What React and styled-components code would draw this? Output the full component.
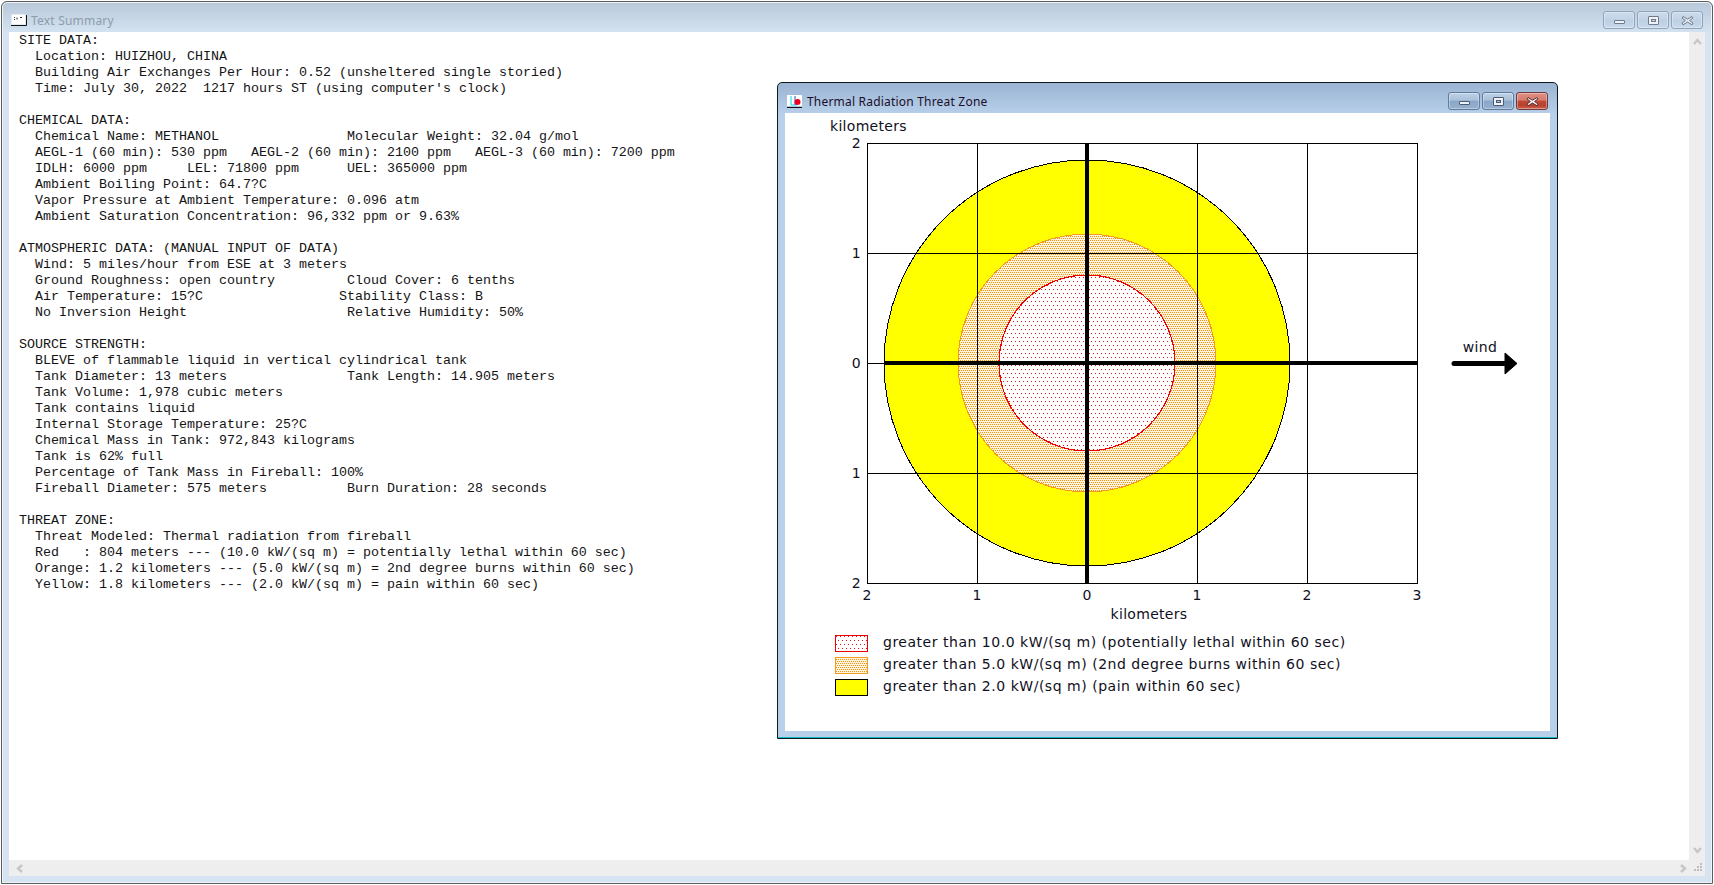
import React from 'react'
import styled, { createGlobalStyle } from 'styled-components'

const GlobalStyle = createGlobalStyle`
  html, body {
    margin: 0;
    padding: 0;
    background: #fff;
    overflow: hidden;
  }
`

const SUMMARY = `SITE DATA:
  Location: HUIZHOU, CHINA
  Building Air Exchanges Per Hour: 0.52 (unsheltered single storied)
  Time: July 30, 2022  1217 hours ST (using computer's clock)

CHEMICAL DATA:
  Chemical Name: METHANOL                Molecular Weight: 32.04 g/mol
  AEGL-1 (60 min): 530 ppm   AEGL-2 (60 min): 2100 ppm   AEGL-3 (60 min): 7200 ppm
  IDLH: 6000 ppm     LEL: 71800 ppm      UEL: 365000 ppm
  Ambient Boiling Point: 64.7?C
  Vapor Pressure at Ambient Temperature: 0.096 atm
  Ambient Saturation Concentration: 96,332 ppm or 9.63%

ATMOSPHERIC DATA: (MANUAL INPUT OF DATA)
  Wind: 5 miles/hour from ESE at 3 meters
  Ground Roughness: open country         Cloud Cover: 6 tenths
  Air Temperature: 15?C                 Stability Class: B
  No Inversion Height                    Relative Humidity: 50%

SOURCE STRENGTH:
  BLEVE of flammable liquid in vertical cylindrical tank
  Tank Diameter: 13 meters               Tank Length: 14.905 meters
  Tank Volume: 1,978 cubic meters
  Tank contains liquid
  Internal Storage Temperature: 25?C
  Chemical Mass in Tank: 972,843 kilograms
  Tank is 62% full
  Percentage of Tank Mass in Fireball: 100%
  Fireball Diameter: 575 meters          Burn Duration: 28 seconds

THREAT ZONE:
  Threat Modeled: Thermal radiation from fireball
  Red   : 804 meters --- (10.0 kW/(sq m) = potentially lethal within 60 sec)
  Orange: 1.2 kilometers --- (5.0 kW/(sq m) = 2nd degree burns within 60 sec)
  Yellow: 1.8 kilometers --- (2.0 kW/(sq m) = pain within 60 sec)`

const LEGEND = [
  { swatch: 'red', label: 'greater than 10.0 kW/(sq m) (potentially lethal within 60 sec)' },
  { swatch: 'orange', label: 'greater than 5.0 kW/(sq m) (2nd degree burns within 60 sec)' },
  { swatch: 'yellow', label: 'greater than 2.0 kW/(sq m) (pain within 60 sec)' }
]

const Desktop = styled.div`
  position: relative;
  width: 1714px;
  height: 885px;
  overflow: hidden;
  padding: 1px 1px 1px 1px;
  box-sizing: border-box;
`

const MainWindow = styled.div`
  display: flex;
  flex-direction: column;
  height: 883px;
  box-sizing: border-box;
  border: 1px solid #5c5c5c;
  border-radius: 6px 6px 0 0;
  box-shadow: inset 0 0 0 1px #f0f4f8;
  padding: 0 7px 7px 7px;
  background: linear-gradient(#b7c8d9 0, #d6e4f2 32px, #d6e4f2 100%);
`

const TitleBar = styled.div`
  display: flex;
  align-items: center;
  flex: none;
  height: 30px;
  box-sizing: border-box;
  padding-top: 6px;
  font-family: "Noto Sans", sans-serif;
  font-size: 12px;
  color: ${p => p.$active ? '#1c0e2c' : '#8c9cab'};
`

const TitleIconSlot = styled.svg`
  flex: none;
  margin: 0 4px 0 2px;
`

const TitleText = styled.span`
  flex: 1;
  letter-spacing: 0.2px;
`

const Buttons = styled.div`
  display: flex;
  gap: 2px;
  margin-right: 2px;
`

const CaptionButton = styled.div`
  display: flex;
  align-items: center;
  justify-content: center;
  width: 32px;
  height: 18px;
  box-sizing: border-box;
  border-radius: 3px;
  border: 1px solid ${p => p.$close ? '#6e3a40' : p.$active ? '#5f7a9c' : '#8fa3bb'};
  background: ${p => p.$close
    ? 'linear-gradient(#e09084 0, #d67a6e 45%, #c04a36 50%, #b8402e 80%, #d06a55 100%)'
    : p.$active
      ? 'linear-gradient(#bfd2e6 0, #a9c0da 45%, #8aa6c6 50%, #95b0cf 100%)'
      : 'linear-gradient(#ccdaea 0, #c4d4e6 45%, #bccfe3 50%, #c8d9eb 100%)'};
  box-shadow: inset 0 0 0 1px rgba(255, 255, 255, 0.35);
`

const MinGlyph = styled.div`
  width: 11px;
  height: 4px;
  margin-top: 4px;
  box-sizing: border-box;
  background: #eef2f6;
  border: 1px solid ${p => p.$active ? '#4a5a70' : '#6e7c8c'};
  border-radius: 1px;
`

const RestoreGlyph = styled.div`
  width: 11px;
  height: 9px;
  box-sizing: border-box;
  background: #eef2f6;
  border: 1px solid ${p => p.$active ? '#4a5a70' : '#6e7c8c'};
  border-radius: 1px;
  display: flex;
  align-items: center;
  justify-content: center;
  &::after {
    content: '';
    width: 5px;
    height: 3px;
    box-sizing: border-box;
    background: ${p => p.$active ? '#a9c0da' : '#c4d4e6'};
    border: 1px solid ${p => p.$active ? '#4a5a70' : '#6e7c8c'};
  }
`

const Client = styled.div`
  flex: 1;
  min-height: 0;
  display: grid;
  grid-template-columns: 1fr 16px;
  grid-template-rows: 1fr 16px;
  background: #fff;
`

const SummaryText = styled.pre`
  margin: 0;
  padding: 1px 0 0 10px;
  font-family: "Liberation Mono", monospace;
  font-size: 13.33px;
  line-height: 16px;
  color: #141414;
  overflow: hidden;
`

const ScrollTrack = styled.div`
  display: flex;
  flex-direction: ${p => p.$vertical ? 'column' : 'row'};
  justify-content: space-between;
  align-items: center;
  background: #eeeeee;
  padding: ${p => p.$vertical ? '5px 0' : '0 1px 0 6px'};
`

const ScrollCorner = styled.div`
  display: flex;
  align-items: flex-end;
  justify-content: flex-end;
  background: #eeeeee;
  padding: 0 2px 4px 0;
`

const SubWindow = styled.div`
  position: absolute;
  left: 777px;
  top: 82px;
  width: 781px;
  height: 657px;
  box-sizing: border-box;
  display: flex;
  flex-direction: column;
  border: 1px solid #0c1a20;
  border-radius: 5px 5px 0 0;
  box-shadow: inset 0 -1px 0 #19b8c4;
  padding: 0 7px 7px 7px;
  background: linear-gradient(#9ab4d2 0, #b8d0ea 32px, #b8d0ea 100%);
`

const SubClient = styled.div`
  flex: 1;
  min-height: 0;
  display: flex;
  flex-direction: column;
  background: #fff;
`

const Chart = styled.svg`
  display: block;
  flex: none;
`

const ChartLabel = styled.text`
  font-family: "DejaVu Sans", sans-serif;
  font-size: 14px;
  letter-spacing: 0.3px;
  fill: #10101c;
`

const Legend = styled.div`
  display: flex;
  flex-direction: column;
  gap: 5px;
  margin: 7px 0 0 50px;
`

const LegendRow = styled.div`
  display: flex;
  align-items: center;
  gap: 15px;
  height: 17px;
`

const Swatch = styled.svg`
  flex: none;
  display: block;
`

const LegendLabel = styled.span`
  font-family: "DejaVu Sans", sans-serif;
  font-size: 14px;
  letter-spacing: 0.52px;
  color: #10101c;
  white-space: nowrap;
  margin-bottom: 4px;
`

function Patterns () {
  return <defs>
    <pattern id='redDots' width='4' height='8' patternUnits='userSpaceOnUse'>
      <rect width='4' height='8' fill='#fff' />
      <rect x='1' y='1' width='1' height='1' fill='#e0121c' />
      <rect x='3' y='5' width='1' height='1' fill='#e0121c' />
    </pattern>
    <pattern id='orangeDots' width='2' height='4' patternUnits='userSpaceOnUse'>
      <rect width='2' height='4' fill='#fff4e0' />
      <rect x='0' y='0' width='1' height='1' fill='#f79000' />
      <rect x='1' y='2' width='1' height='1' fill='#f79000' />
    </pattern>
  </defs>
}

const SWATCH_STYLE = {
  red: { fill: 'url(#redDots)', stroke: '#f00000' },
  orange: { fill: 'url(#orangeDots)', stroke: '#f59a1e' },
  yellow: { fill: '#ffff00', stroke: '#000' }
}

function LegendSwatch ({ kind }) {
  const s = SWATCH_STYLE[kind]
  return <Swatch width='33' height='17'>
    <rect x='0.5' y='0.5' width='32' height='16' fill={s.fill} stroke={s.stroke} />
  </Swatch>
}

const CX = 1087
const CY = 363
const GRID_X = [867, 977, 1087, 1197, 1307, 1417]
const GRID_Y = [143, 253, 363, 473, 583]

function ThreatChart () {
  return <Chart width='765' height='515' viewBox='785 113 765 515' shapeRendering='crispEdges'>
    <Patterns />
    <rect x='867.5' y='143.5' width='550' height='440' fill='#fff' />
    <circle cx={CX} cy={CY} r='203' fill='#ffff00' stroke='#000' strokeWidth='1' />
    <circle cx={CX} cy={CY} r='129' fill='url(#orangeDots)' stroke='#f59a1e' strokeWidth='1' />
    <circle cx={CX} cy={CY} r='88' fill='url(#redDots)' stroke='#f00000' strokeWidth='1.2' />
    {GRID_X.map(x => <line key={x} x1={x + 0.5} x2={x + 0.5} y1='143' y2='584' stroke='#000' />)}
    {GRID_Y.map(y => <line key={y} x1='867' x2='1418' y1={y + 0.5} y2={y + 0.5} stroke='#000' />)}
    <rect x='1085' y='143' width='4' height='441' fill='#000' />
    <rect x='884' y='361' width='534' height='4' fill='#000' />

    <ChartLabel x='830' y='131'>kilometers</ChartLabel>
    {[['2', 143], ['1', 253], ['0', 363], ['1', 473], ['2', 583]].map(([t, y]) =>
      <ChartLabel key={y} x='861' y={y + 5} textAnchor='end'>{t}</ChartLabel>
    )}
    {['2', '1', '0', '1', '2', '3'].map((t, i) =>
      <ChartLabel key={i} x={GRID_X[i]} y='600' textAnchor='middle'>{t}</ChartLabel>
    )}
    <ChartLabel x='1149' y='619' textAnchor='middle'>kilometers</ChartLabel>

    <ChartLabel x='1480' y='352' textAnchor='middle'>wind</ChartLabel>
    <g shapeRendering='auto'>
      <line x1='1454' x2='1508' y1='363.5' y2='363.5' stroke='#000' strokeWidth='5' strokeLinecap='round' />
      <path d='M1505 353 L1517 363.5 L1505 374 Z' fill='#000' stroke='#000' strokeLinejoin='round' />
    </g>
  </Chart>
}

function SummaryIcon () {
  return <TitleIconSlot width='16' height='13' viewBox='0 0 16 13'>
    <rect x='0.5' y='0.5' width='14' height='10' fill='#fff' />
    <path d='M0 11.5H15.5V1' fill='none' stroke='#111' />
    <path d='M3 3.5H4M3 5.5H4M6 3.5V5.5M9 3.5H11' stroke='#333' fill='none' />
  </TitleIconSlot>
}

function ThreatIcon () {
  return <TitleIconSlot width='16' height='13' viewBox='0 0 16 13'>
    <rect width='15' height='11' fill='#fff' />
    <path d='M4 1V10H10' fill='none' stroke='#00d8e8' />
    <path d='M8 1V10' stroke='#3050c0' fill='none' />
    <circle cx='10.5' cy='7' r='3' fill='#f00020' />
    <path d='M0 12.5H15' stroke='#111' />
  </TitleIconSlot>
}

function CloseGlyph ({ active }) {
  return <svg width='13' height='11' viewBox='0 0 13 11'>
    <path d='M2 1.5 L6.5 4.2 L11 1.5 L12 3 L8.6 5.5 L12 8 L11 9.8 L6.5 7 L2 9.8 L1 8 L4.4 5.5 L1 3 Z'
      fill={active ? '#f6f0ee' : '#e6ecf2'} stroke={active ? '#5a3030' : '#6e7c8c'} />
  </svg>
}

function WindowButtons ({ active }) {
  return <Buttons>
    <CaptionButton $active={active}><MinGlyph $active={active} /></CaptionButton>
    <CaptionButton $active={active}><RestoreGlyph $active={active} /></CaptionButton>
    <CaptionButton $active={active} $close={active}><CloseGlyph active={active} /></CaptionButton>
  </Buttons>
}

function Chevron ({ dir }) {
  const rot = { up: 0, right: 90, down: 180, left: 270 }[dir]
  return <svg width='9' height='9' viewBox='0 0 9 9' style={{ transform: `rotate(${rot}deg)` }}>
    <path d='M1 7 L4.5 3 L8 7' fill='none' stroke='#c6c6c6' strokeWidth='2.4' />
  </svg>
}

function Grip () {
  return <svg width='9' height='9' viewBox='0 0 9 9'>
    <path d='M6 0h2v2h-2zM3 3h2v2h-2zM6 3h2v2h-2zM0 6h2v2h-2zM3 6h2v2h-2zM6 6h2v2h-2z' fill='#bdbdbd' />
  </svg>
}

export default function App () {
  return <Desktop>
    <GlobalStyle />
    <MainWindow>
      <TitleBar>
        <SummaryIcon />
        <TitleText>Text Summary</TitleText>
        <WindowButtons />
      </TitleBar>
      <Client>
        <SummaryText>{SUMMARY}</SummaryText>
        <ScrollTrack $vertical><Chevron dir='up' /><Chevron dir='down' /></ScrollTrack>
        <ScrollTrack><Chevron dir='left' /><Chevron dir='right' /></ScrollTrack>
        <ScrollCorner><Grip /></ScrollCorner>
      </Client>
    </MainWindow>
    <SubWindow>
      <TitleBar $active>
        <ThreatIcon />
        <TitleText>Thermal Radiation Threat Zone</TitleText>
        <WindowButtons active />
      </TitleBar>
      <SubClient>
        <ThreatChart />
        <Legend>
          {LEGEND.map(l => <LegendRow key={l.swatch}>
            <LegendSwatch kind={l.swatch} />
            <LegendLabel>{l.label}</LegendLabel>
          </LegendRow>)}
        </Legend>
      </SubClient>
    </SubWindow>
  </Desktop>
}
